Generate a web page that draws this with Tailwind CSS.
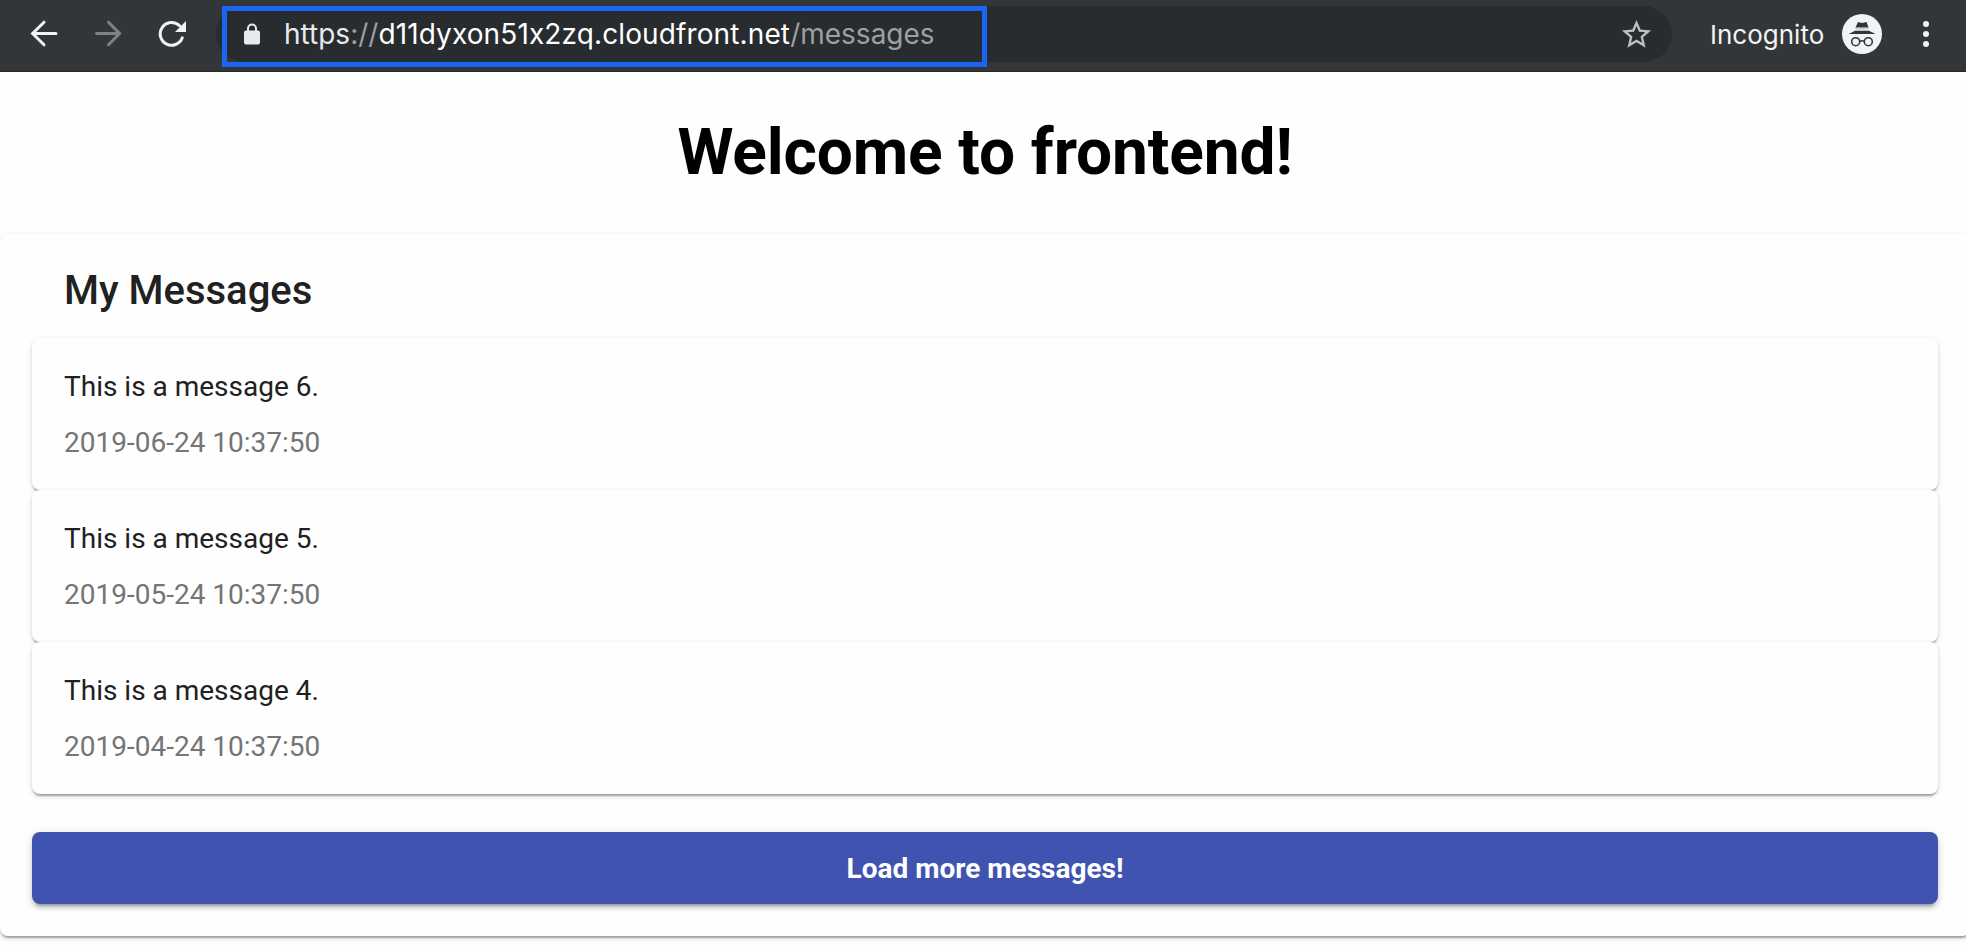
<!DOCTYPE html>
<html lang="en">
<head>
<meta charset="utf-8">
<title>Frontend</title>
<script src="https://cdn.jsdelivr.net/npm/@tailwindcss/browser@4"></script>
</head>
<body class="w-[1966px] h-[950px] overflow-hidden bg-[#fefefe] font-[Roboto,sans-serif]">
<header class="relative flex h-[72px] items-start border-b border-[#242628] bg-[#323639] pt-1.5">
  <nav class="flex h-14 w-[216px] shrink-0 items-center">
    <svg class="ml-[30px] h-7 w-7" viewBox="0 0 28 28" fill="none" stroke="#f1f3f4" stroke-width="3"><path d="M26 13.500H3M14 2.200L2.600 13.500L14 24.800" stroke-linecap="round"/></svg>
    <svg class="ml-9 h-7 w-7" viewBox="0 0 28 28" fill="none" stroke="#7f8183" stroke-width="3"><path d="M2.500 13.500H25M14.500 2.200L25.600 13.500L14.500 24.800" stroke-linecap="round"/></svg>
    <svg class="ml-9 h-7 w-7" viewBox="0 0 28 28" fill="none"><path d="M24.300 17.800A11.400 11.400 0 1 1 21.600 5.700" stroke="#f1f3f4" stroke-width="3" stroke-linecap="round"/><path d="M28 1V12H17Z" fill="#f1f3f4"/></svg>
  </nav>
  <div class="flex h-14 w-[1456px] shrink-0 items-center rounded-full bg-[#282c2f]">
    <svg class="ml-7 h-[22px] w-4" viewBox="0 0 16 22"><path d="M4 9V5.500a4 4 0 0 1 8 0V9" fill="none" stroke="#e8eaed" stroke-width="2"/><rect y="7.500" width="16" height="14" rx="2" fill="#e8eaed"/></svg>
    <div class="ml-6 font-[Inter,sans-serif] text-[28px] leading-[34px] whitespace-nowrap text-[#9aa0a6] [font-feature-settings:'calt'_0]"><span class="text-[#e8eaed]">https</span>://<span class="tracking-[0.12px] text-white">d11dyxon51x2zq.cloudfront.net</span>/messages</div>
    <svg class="mr-[18.500px] ml-auto h-[35px] w-[35px]" viewBox="0 0 24 24" fill="#bdc1c6"><path d="M22 9.240l-7.190-.62L12 2 9.190 8.630 2 9.240l5.460 4.730L5.820 21 12 17.270 18.180 21l-1.630-7.030L22 9.240zM12 15.400l-3.760 2.270 1-4.280-3.320-2.880 4.380-.38L12 6.100l1.710 4.040 4.380.38-3.320 2.880 1 4.280L12 15.400z"/></svg>
  </div>
  <div class="flex h-14 items-center pl-[38px]">
    <span class="w-[132px] pt-0.5 font-[Inter,sans-serif] text-[26px] leading-[34px] text-[#f1f3f4]">Incognito</span>
    <svg class="h-10 w-10" viewBox="0 0 40 40"><circle cx="20" cy="20" r="20" fill="#f1f3f4"/><path d="M16 8L20 9L24.500 8L26.500 13.400H13.500ZM13 16.700H27L33.500 20H6.700Z" fill="#323639"/><path d="M13.300 14.700H26.700" stroke="#c9cbcd" stroke-width="1.500"/><g fill="none" stroke="#323639" stroke-width="1.600"><circle cx="13.700" cy="27.700" r="4"/><circle cx="26.300" cy="27.700" r="4"/><path d="M17.700 27.300Q20 26.200 22.300 27.300"/></g></svg>
    <svg class="ml-10 h-7 w-2" viewBox="0 0 8 28" fill="#f1f3f4"><circle cx="4" cy="4" r="3"/><circle cx="4" cy="14" r="3"/><circle cx="4" cy="24" r="3"/></svg>
  </div>
  <div class="absolute top-1.5 left-[222px] h-[61px] w-[765px] border-5 border-[#1c64f2]"></div>
</header>
<main class="w-[1970px]">
  <h1 class="h-[162px] pt-[43px] text-center text-[64px] leading-[75px] font-bold tracking-[-0.12px] text-black">Welcome to frontend!</h1>
  <section class="h-[702px] rounded-lg bg-[#fefefe] px-8 pt-8 shadow-[0_4px_2px_-2px_rgba(0,0,0,.2),0_2px_2px_0_rgba(0,0,0,.14),0_2px_6px_0_rgba(0,0,0,.12)]">
    <h2 class="h-[72px] pl-8 text-[40px] leading-[50px] font-medium text-[#212121]">My Messages</h2>
    <article class="h-[152px] rounded-lg bg-[#fefefe] px-8 pt-[33px] text-[28px] shadow-[0_4px_2px_-2px_rgba(0,0,0,.2),0_2px_2px_0_rgba(0,0,0,.14),0_2px_6px_0_rgba(0,0,0,.12)]">
      <p class="leading-8 text-[#212121]">This is a message 6.</p><p class="mt-6 leading-8 text-[#757575]">2019-06-24 10:37:50</p>
    </article>
    <article class="h-[152px] rounded-lg bg-[#fefefe] px-8 pt-[33px] text-[28px] shadow-[0_4px_2px_-2px_rgba(0,0,0,.2),0_2px_2px_0_rgba(0,0,0,.14),0_2px_6px_0_rgba(0,0,0,.12)]">
      <p class="leading-8 text-[#212121]">This is a message 5.</p><p class="mt-6 leading-8 text-[#757575]">2019-05-24 10:37:50</p>
    </article>
    <article class="h-[152px] rounded-lg bg-[#fefefe] px-8 pt-[33px] text-[28px] shadow-[0_4px_2px_-2px_rgba(0,0,0,.2),0_2px_2px_0_rgba(0,0,0,.14),0_2px_6px_0_rgba(0,0,0,.12)]">
      <p class="leading-8 text-[#212121]">This is a message 4.</p><p class="mt-6 leading-8 text-[#757575]">2019-04-24 10:37:50</p>
    </article>
    <button class="mt-[38px] block h-[72px] w-full rounded-lg bg-[#4053b0] pt-px text-[28px] leading-[72px] font-bold text-white shadow-[0_6px_2px_-4px_rgba(0,0,0,.2),0_4px_4px_0_rgba(0,0,0,.14),0_2px_10px_0_rgba(0,0,0,.12)]">Load more messages!</button>
  </section>
</main>
</body>
</html>
